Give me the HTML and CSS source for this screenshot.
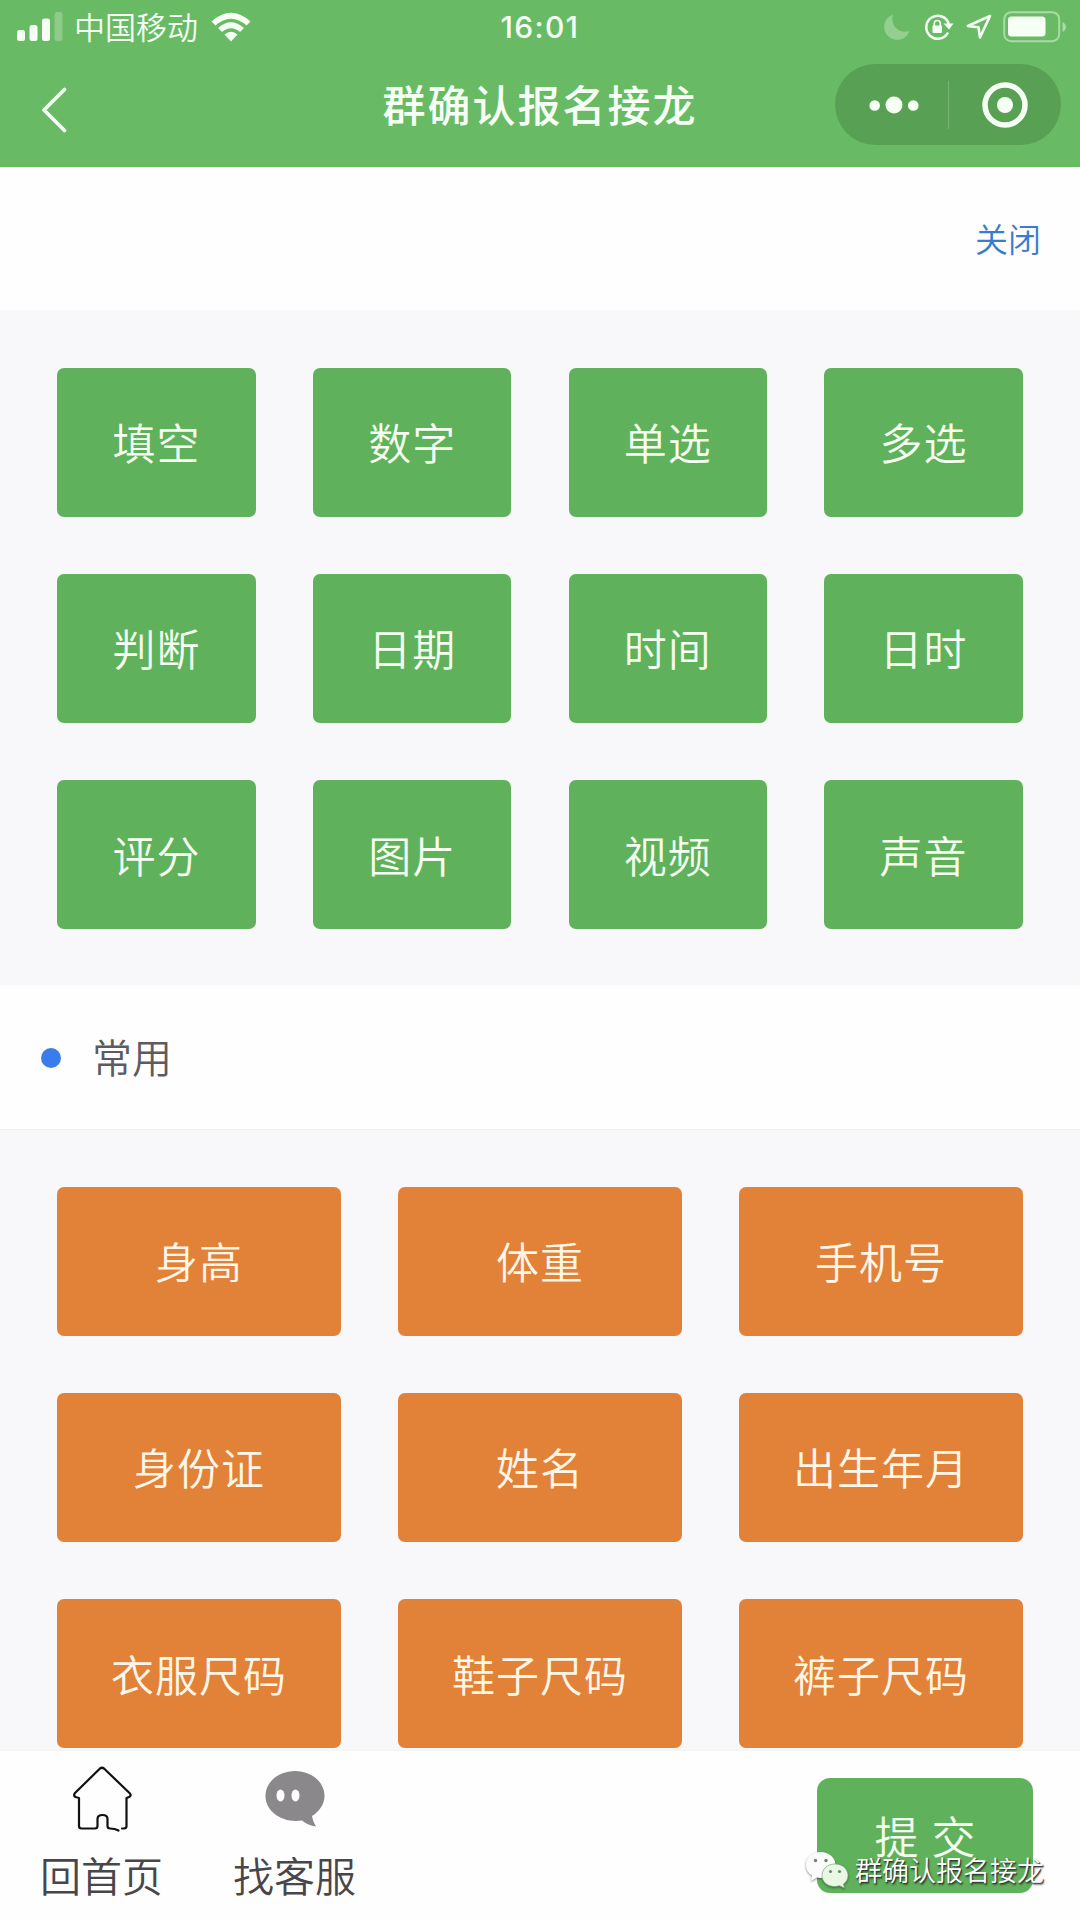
FILE: index.html
```html
<!DOCTYPE html>
<html lang="zh-CN">
<head>
    <meta charset="UTF-8">
    <meta name="viewport" content="width=device-width, initial-scale=1.0">
    <title>群确认报名接龙</title>
    <link rel="stylesheet" href="styles.css">
</head>
<body>

    <header class="header">
        <div class="status-bar">
            <div class="status-left">
                <svg class="signal" width="46" height="30" viewBox="0 0 46 30">
                    <rect x="0" y="18" width="8" height="11" rx="2.5" />
                    <rect x="12.5" y="13" width="8" height="16" rx="2.5" />
                    <rect x="25" y="6.500" width="8" height="22.500" rx="2.500" />
                    <rect class="dim" x="37.500" y="0" width="8" height="29" rx="2.500" />
                </svg>
                <span class="carrier">中国移动</span>
                <svg class="wifi" width="40" height="30" viewBox="0 0 40 30">
                    <path d="M0.500 9.500 Q20 -8 39.500 9.500 L35.500 13.500 Q20 0 4.500 13.500 Z" />
                    <path d="M7 16 Q20 4.500 33 16 L29 20 Q20 12.500 11 20 Z" />
                    <path d="M13.500 22.500 Q20 17 26.500 22.500 L20 29.500 Z" />
                </svg>
            </div>
            <span class="time">16:01</span>
            <div class="status-right">
                <svg class="moon" width="26" height="26" viewBox="0 0 26 26">
                    <path d="M9 0.500 A13 13 0 1 0 25.500 17 C15 20.500 5.500 11 9 0.500 Z" />
                </svg>
                <svg class="lock" width="30" height="28" viewBox="0 0 30 28">
                    <path class="line" d="M24 19.500 A11.500 11.500 0 1 1 24.800 11" />
                    <path d="M19.500 10.500 H29.500 L25 16.500 Z" />
                    <rect x="8.500" y="12.500" width="9.500" height="7.500" rx="1" />
                    <path class="thin" d="M10.300 13 V10.500 a3 3 0 0 1 6 0 V13" />
                </svg>
                <svg class="location" width="26" height="26" viewBox="0 0 26 26">
                    <path d="M24 2 L1.800 12 L12.500 13.200 L14 23.500 Z" />
                </svg>
                <svg class="battery" width="64" height="32" viewBox="0 0 64 32">
                    <rect class="case" x="1.200" y="1.200" width="55" height="29" rx="7" />
                    <rect class="level" x="5" y="5.500" width="37.500" height="20" rx="3.500" />
                    <path class="cap" d="M59.500 11 Q63 13 63 16 Q63 19 59.500 21 Z" />
                </svg>
            </div>
        </div>
        <div class="nav-bar">
            <svg class="back" width="26" height="46" viewBox="0 0 26 46">
                <path d="M23.500 2.500 L3 23 L23.500 43.500" />
            </svg>
            <h1>群确认报名接龙</h1>
            <div class="capsule">
                <svg width="50" height="18" viewBox="0 0 50 18">
                    <circle cx="5.700" cy="9.500" r="5.300" />
                    <circle cx="25" cy="9" r="8.500" />
                    <circle cx="44.300" cy="9.500" r="5.300" />
                </svg>
                <span class="capsule-line"></span>
                <svg width="46" height="46" viewBox="0 0 46 46">
                    <circle class="ring" cx="23" cy="23" r="20" />
                    <circle cx="23" cy="23" r="8" />
                </svg>
            </div>
        </div>
    </header>

    <div class="close-row">
        <a class="close">关闭</a>
    </div>

    <!-- 题型 -->
    <section class="grid grid-types">
        <button class="btn btn-green">填空</button>
        <button class="btn btn-green">数字</button>
        <button class="btn btn-green">单选</button>
        <button class="btn btn-green">多选</button>
        <button class="btn btn-green">判断</button>
        <button class="btn btn-green">日期</button>
        <button class="btn btn-green">时间</button>
        <button class="btn btn-green">日时</button>
        <button class="btn btn-green">评分</button>
        <button class="btn btn-green">图片</button>
        <button class="btn btn-green">视频</button>
        <button class="btn btn-green">声音</button>
    </section>

    <div class="section-title">
        <span class="dot"></span>
        <h2>常用</h2>
    </div>

    <!-- 常用字段 -->
    <section class="grid grid-common">
        <button class="btn btn-orange">身高</button>
        <button class="btn btn-orange">体重</button>
        <button class="btn btn-orange">手机号</button>
        <button class="btn btn-orange">身份证</button>
        <button class="btn btn-orange">姓名</button>
        <button class="btn btn-orange">出生年月</button>
        <button class="btn btn-orange">衣服尺码</button>
        <button class="btn btn-orange">鞋子尺码</button>
        <button class="btn btn-orange">裤子尺码</button>
    </section>

    <footer class="footer">
        <a class="tab">
            <svg class="home" width="60" height="68" viewBox="0 0 60 68">
                <path d="M50 62.500 H52 Q54.500 62.500 54.500 60 V32 L57 31 Q60 29.500 57.500 27 L32 2.500 Q30 1 28 2.500 L3 27 Q1 29.500 3.500 31 L7 32 V60 Q7 62.500 9.500 62.500 H23 Q25.500 62.500 25.500 60 V53 Q25.500 49 30.500 49 Q35.500 49 35.500 53 V60 Q35.500 62.500 38 62.500 Q43 62.500 46.500 64.500" />
            </svg>
            <span>回首页</span>
        </a>
        <a class="tab">
            <svg class="chat" width="60" height="68" viewBox="0 0 60 68">
                <path d="M30 5 C46.500 5 59.500 16 59.500 30 C59.500 38 54.500 45.500 47 50 Q47.500 55 51 60.500 Q43 59.500 37 54.500 C18 57.500 0.500 46 0.500 30 C0.500 16 13.500 5 30 5 Z" />
                <ellipse cx="15.500" cy="29.500" rx="4" ry="6" />
                <ellipse cx="30.500" cy="29.500" rx="4" ry="6" />
            </svg>
            <span>找客服</span>
        </a>
        <button class="submit">提 交</button>
        <div class="watermark">
            <svg width="44" height="38" viewBox="0 0 44 38">
                <path class="bubble-back" d="M15.500 1 C24 1 30.500 6.500 30.500 14 C30.500 21.500 24 27 15.500 27 L12 26.500 L6 30 L7 24.500 C3 22 1 18.500 1 14 C1 6.500 7 1 15.500 1 Z" />
                <path class="bubble-front" d="M30 13 C37.500 13 43 18 43 24.500 C43 28 41.500 31 38.500 33 L39.500 37 L34.500 34.800 L30 35.500 C22.500 35.500 17 31 17 24.500 C17 18 22.500 13 30 13 Z" />
                <circle cx="10.500" cy="9.500" r="1.700" />
                <circle cx="21" cy="9.500" r="1.700" />
                <circle cx="25.500" cy="20.500" r="1.600" />
                <circle cx="34.500" cy="20.500" r="1.600" />
            </svg>
            <span>群确认报名接龙</span>
        </div>
    </footer>

</body>
</html>
```
FILE: styles.css
```css
* {
    margin: 0;
    padding: 0;
    box-sizing: border-box;
}

body {
    width: 1080px;
    height: 1920px;
    display: flex;
    flex-direction: column;
    overflow: hidden;
    font-family: "Noto Sans CJK SC", sans-serif;
    font-weight: 350;
    background-color: #fefefe;
}

svg {
    display: block;
    flex: none;
}

button {
    border: none;
    font-family: inherit;
    font-weight: inherit;
    cursor: pointer;
}

/* 顶部 */
.header {
    height: 167px;
    flex: none;
    background-color: #68bb64;
    color: #f6fff4;
    fill: #f6fff4;
}

.status-bar {
    height: 54px;
    padding: 0 13px 0 17px;
    display: grid;
    grid-template-columns: 1fr auto 1fr;
    align-items: center;
}

.status-left {
    display: flex;
    align-items: center;
}

.signal .dim {
    opacity: 0.25;
}

.carrier {
    margin: 0 13px 0 11px;
    font-size: 31px;
    line-height: 52px;
    height: 54px;
}

.time {
    font-family: Inter, sans-serif;
    font-size: 30px;
    font-weight: 500;
    letter-spacing: 1.3px;
    margin-left: -4px;
}

.status-right {
    display: flex;
    align-items: center;
    justify-content: flex-end;
}

.moon {
    opacity: 0.3;
    margin-right: 14px;
}

.lock {
    margin-right: 12px;
}

.lock .line {
    fill: none;
    stroke: #f6fff4;
    stroke-width: 2.5;
}

.lock .thin {
    fill: none;
    stroke: #f6fff4;
    stroke-width: 1.6;
}

.location {
    fill: none;
    stroke: #f6fff4;
    stroke-width: 2.6;
    stroke-linejoin: round;
    margin-right: 11px;
}

.battery .case {
    fill: none;
    stroke: #a9dca5;
    stroke-width: 2;
}

.battery .cap {
    fill: #a9dca5;
}

.nav-bar {
    height: 101px;
    padding: 0 19px 0 41px;
    display: grid;
    grid-template-columns: 1fr auto 1fr;
    align-items: center;
}

.back {
    margin-top: 10px;
    fill: none;
    stroke: #f6fff4;
    stroke-width: 3.6;
    stroke-linecap: round;
    stroke-linejoin: round;
}

.nav-bar h1 {
    font-size: 43px;
    font-weight: 500;
    letter-spacing: 2px;
    line-height: 60px;
    margin: -3px 0 0 -22px;
}

.capsule {
    justify-self: end;
    width: 226px;
    height: 81px;
    padding: 0 33px 0 34px;
    border-radius: 41px;
    background-color: #58a053;
    display: flex;
    align-items: center;
    justify-content: space-between;
}

.capsule-line {
    width: 1px;
    height: 48px;
    margin-right: 4px;
    background-color: #78b373;
}

.capsule .ring {
    fill: none;
    stroke: #f6fff4;
    stroke-width: 5.5;
}

.close-row {
    height: 143px;
    flex: none;
    padding: 0 39px 2px 0;
    display: flex;
    align-items: center;
    justify-content: flex-end;
}

.close {
    color: #3a7bd0;
    font-size: 33px;
}

/* 按钮网格 */
.grid {
    flex: none;
    display: grid;
    gap: 57.400px;
    padding: 58px 57.300px 0;
    grid-auto-rows: 148.700px;
    background-color: #f8f7fa;
}

.grid-types {
    height: 675px;
    grid-template-columns: repeat(4, 1fr);
}

.grid-common {
    height: 621px;
    padding-top: 57px;
    border-top: 1px solid #efeff1;
    grid-template-columns: repeat(3, 1fr);
}

.btn {
    padding-bottom: 2px;
    border-radius: 7px;
    font-size: 43px;
    letter-spacing: 1px;
    line-height: 60px;
}

.btn-green {
    background-color: #60b15b;
    color: #f4fff0;
}

.btn-orange {
    background-color: #e28138;
    color: #fff6e8;
}

.section-title {
    height: 144px;
    flex: none;
    padding-left: 41px;
    display: flex;
    align-items: center;
}

.dot {
    width: 20px;
    height: 20px;
    margin: 1px 31px 0 0;
    border-radius: 50%;
    background-color: #3a7cec;
}

.section-title h2 {
    padding-bottom: 3px;
    color: #5d5b60;
    font-size: 40px;
    font-weight: inherit;
}

/* 底部 */
.footer {
    position: relative;
    height: 170px;
    flex: none;
    padding: 0 47px 0 39px;
    display: flex;
    border-top: 1px solid #f3f3f4;
    background-color: #fefefe;
}

.tab {
    width: 125px;
    margin-right: 68px;
    padding-top: 15px;
    display: flex;
    flex-direction: column;
    align-items: center;
    color: #48464a;
    font-size: 41px;
    line-height: 60px;
    white-space: nowrap;
}

.tab span {
    margin-top: 10px;
}

.home {
    fill: none;
    stroke: #111;
    stroke-width: 2.2;
    stroke-linecap: round;
    stroke-linejoin: round;
}

.chat path {
    fill: #8a888a;
}

.chat ellipse {
    fill: #fefefe;
}

.submit {
    width: 216px;
    height: 115px;
    margin: 27px 0 0 auto;
    padding-bottom: 2px;
    border-radius: 13px;
    background-color: #60b15b;
    color: #f4fff0;
    font-size: 44px;
    word-spacing: 3px;
}

/* 水印 */
.watermark {
    position: absolute;
    left: 805px;
    top: 99px;
    display: flex;
    align-items: center;
    gap: 6px;
    color: #fff;
    font-size: 27px;
    line-height: 40px;
    white-space: nowrap;
    text-shadow: 1px 1px 1px #333, 1px 2px 2px rgba(0, 0, 0, 0.5);
}

.watermark svg {
    fill: #6b8a69;
    filter: drop-shadow(0 1px 1px rgba(0, 0, 0, 0.45));
}

.bubble-back {
    fill: #fbfbfb;
}

.bubble-front {
    fill: #e8f8e4;
    stroke: #80a57e;
    stroke-width: 0.7;
}
```
